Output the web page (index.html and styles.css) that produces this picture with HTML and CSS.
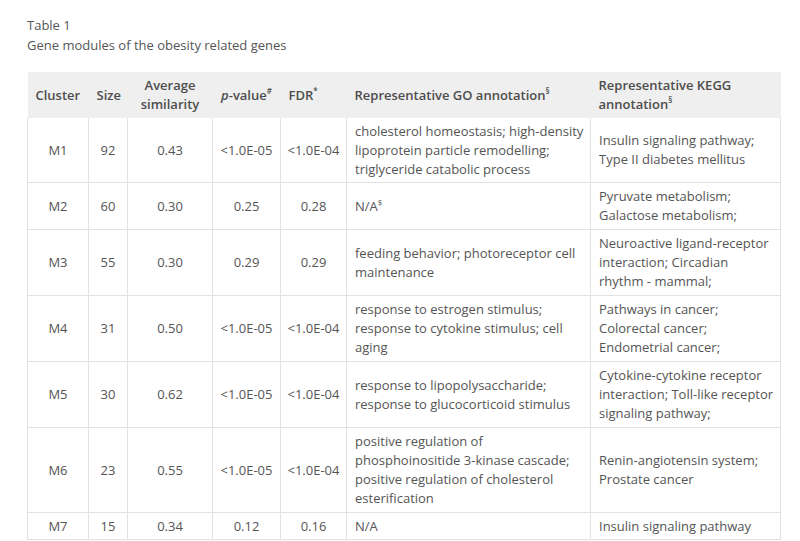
FILE: index.html
```html
<!DOCTYPE html>
<html>
<head>
<meta charset="utf-8">
<link rel="stylesheet" href="styles.css">
</head>
<body>
<div class="caption">
  <div>Table 1</div>
  <div>Gene modules of the obesity related genes</div>
</div>
<table class="data">
  <colgroup>
    <col class="c-cluster"><col class="c-size"><col class="c-avg"><col class="c-p"><col class="c-fdr"><col class="c-go"><col class="c-kegg">
  </colgroup>
  <thead>
    <tr>
      <th class="left">Cluster</th>
      <th class="left">Size</th>
      <th class="center">Average<br>similarity</th>
      <th class="center"><i>p</i>-value<sup>#</sup></th>
      <th class="left">FDR<sup>*</sup></th>
      <th class="left">Representative GO annotation<sup>§</sup></th>
      <th class="left">Representative KEGG<br>annotation<sup>§</sup></th>
    </tr>
  </thead>
  <tbody>
    <tr class="r1">
      <td class="num">M1</td><td class="num">92</td><td class="num">0.43</td><td class="num">&lt;1.0E-05</td><td class="num">&lt;1.0E-04</td>
      <td class="txt">cholesterol homeostasis; high-density<br>lipoprotein particle remodelling;<br>triglyceride catabolic process</td>
      <td class="txt">Insulin signaling pathway;<br>Type II diabetes mellitus</td>
    </tr>
    <tr class="r2">
      <td class="num">M2</td><td class="num">60</td><td class="num">0.30</td><td class="num">0.25</td><td class="num">0.28</td>
      <td class="txt">N/A<sup>$</sup></td>
      <td class="txt">Pyruvate metabolism;<br>Galactose metabolism;</td>
    </tr>
    <tr class="r3">
      <td class="num">M3</td><td class="num">55</td><td class="num">0.30</td><td class="num">0.29</td><td class="num">0.29</td>
      <td class="txt">feeding behavior; photoreceptor cell<br>maintenance</td>
      <td class="txt">Neuroactive ligand-receptor<br>interaction; Circadian<br>rhythm - mammal;</td>
    </tr>
    <tr class="r4">
      <td class="num">M4</td><td class="num">31</td><td class="num">0.50</td><td class="num">&lt;1.0E-05</td><td class="num">&lt;1.0E-04</td>
      <td class="txt">response to estrogen stimulus;<br>response to cytokine stimulus; cell<br>aging</td>
      <td class="txt">Pathways in cancer;<br>Colorectal cancer;<br>Endometrial cancer;</td>
    </tr>
    <tr class="r5">
      <td class="num">M5</td><td class="num">30</td><td class="num">0.62</td><td class="num">&lt;1.0E-05</td><td class="num">&lt;1.0E-04</td>
      <td class="txt">response to lipopolysaccharide;<br>response to glucocorticoid stimulus</td>
      <td class="txt">Cytokine-cytokine receptor<br>interaction; Toll-like receptor<br>signaling pathway;</td>
    </tr>
    <tr class="r6">
      <td class="num">M6</td><td class="num">23</td><td class="num">0.55</td><td class="num">&lt;1.0E-05</td><td class="num">&lt;1.0E-04</td>
      <td class="txt">positive regulation of<br>phosphoinositide 3-kinase cascade;<br>positive regulation of cholesterol<br>esterification</td>
      <td class="txt">Renin-angiotensin system;<br>Prostate cancer</td>
    </tr>
    <tr class="r7">
      <td class="num">M7</td><td class="num">15</td><td class="num">0.34</td><td class="num">0.12</td><td class="num">0.16</td>
      <td class="txt">N/A</td>
      <td class="txt">Insulin signaling pathway</td>
    </tr>
  </tbody>
</table>
</body>
</html>
```

FILE: styles.css
```css
html, body {
  margin: 0;
  background: #ffffff;
}
body {
  padding: 15px 0 0 27px;
  font-family: "Open Sans", "Liberation Sans", sans-serif;
  font-size: 13px;
  color: #555555;
}
.caption {
  line-height: 20px;
  margin-bottom: 17px;
}
.data {
  border-collapse: collapse;
  table-layout: fixed;
  width: 753px;
  font-size: 13px;
  line-height: 19px;
}
.c-cluster { width: 61px; }
.c-size { width: 39px; }
.c-avg { width: 85px; }
.c-p { width: 68px; }
.c-fdr { width: 66px; }
.c-go { width: 244px; }
.c-kegg { width: 190px; }
.data th {
  background: #efefef;
  font-weight: 600;
  color: #4d4d4d;
  padding: 3px 0 3px 8px;
  vertical-align: middle;
  border: 1px solid #efefef;
  border-left: none;
  border-right: none;
  white-space: nowrap;
}
.data th.left { text-align: left; }
.data th.center { text-align: center; padding: 3px 2px; }
.data td {
  border: 1px solid #e2e2e2;
  padding: 3px 8px;
  vertical-align: middle;
  text-align: left;
}
.data td.txt {
  padding: 3px 0 3px 8px;
  white-space: nowrap;
}
.data td.num {
  text-align: center;
  padding: 3px 2px;
}
.data sup {
  font-size: 8px;
  line-height: 0;
  vertical-align: 6px;
}
.r1 td { height: 58px; }
.r2 td { height: 40px; }
.r3 td { height: 59px; }
.r4 td { height: 59px; }
.r5 td { height: 59px; }
.r6 td { height: 78px; }
.r7 td { height: 20px; }
```
